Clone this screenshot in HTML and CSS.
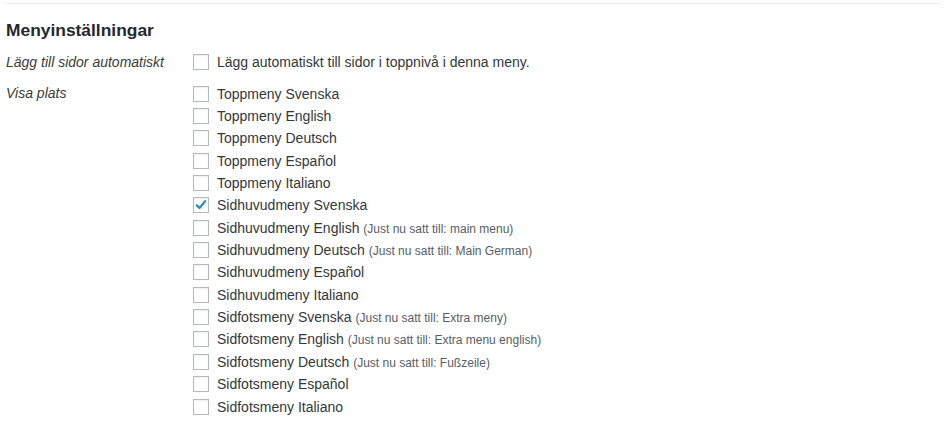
FILE: index.html
```html
<!DOCTYPE html>
<html lang="sv">
<head>
    <meta charset="UTF-8">
    <title>Menyinställningar</title>
    <link rel="stylesheet" href="styles.css">
</head>
<body>
    <div class="menuSettings">
        <h3 class="settingsTitle">Menyinställningar</h3>

        <dl class="settingGroup autoAdd">
            <dt class="groupLabel">Lägg till sidor automatiskt</dt>
            <dd class="groupInput">
                <label class="option"><span class="checkbox"></span><span>Lägg automatiskt till sidor i toppnivå i denna meny.</span></label>
            </dd>
        </dl>

        <dl class="settingGroup locations">
            <dt class="groupLabel">Visa plats</dt>
            <dd class="groupInput">
                <label class="option"><span class="checkbox"></span><span>Toppmeny Svenska</span></label>
                <label class="option"><span class="checkbox"></span><span>Toppmeny English</span></label>
                <label class="option"><span class="checkbox"></span><span>Toppmeny Deutsch</span></label>
                <label class="option"><span class="checkbox"></span><span>Toppmeny Español</span></label>
                <label class="option"><span class="checkbox"></span><span>Toppmeny Italiano</span></label>
                <label class="option"><span class="checkbox checked">
                    <svg viewBox="0 0 16 16" width="16" height="16"><path d="M3.2 8.2 L6.3 11.4 L12.8 3.6" fill="none" stroke="#1e8cbe" stroke-width="2.4" stroke-linecap="round" stroke-linejoin="round"/></svg>
                </span><span>Sidhuvudmeny Svenska</span></label>
                <label class="option"><span class="checkbox"></span><span>Sidhuvudmeny English <span class="current">(Just nu satt till: main menu)</span></span></label>
                <label class="option"><span class="checkbox"></span><span>Sidhuvudmeny Deutsch <span class="current">(Just nu satt till: Main German)</span></span></label>
                <label class="option"><span class="checkbox"></span><span>Sidhuvudmeny Español</span></label>
                <label class="option"><span class="checkbox"></span><span>Sidhuvudmeny Italiano</span></label>
                <label class="option"><span class="checkbox"></span><span>Sidfotsmeny Svenska <span class="current">(Just nu satt till: Extra meny)</span></span></label>
                <label class="option"><span class="checkbox"></span><span>Sidfotsmeny English <span class="current">(Just nu satt till: Extra menu english)</span></span></label>
                <label class="option"><span class="checkbox"></span><span>Sidfotsmeny Deutsch <span class="current">(Just nu satt till: Fußzeile)</span></span></label>
                <label class="option"><span class="checkbox"></span><span>Sidfotsmeny Español</span></label>
                <label class="option"><span class="checkbox"></span><span>Sidfotsmeny Italiano</span></label>
            </dd>
        </dl>
    </div>
</body>
</html>
```

FILE: styles.css
```css
* {
    margin: 0;
    padding: 0;
    box-sizing: border-box;
}

body {
    background: #fff;
    color: #32373c;
    font-family: "Liberation Sans", Arial, sans-serif;
    font-size: 14px;
}

.menuSettings {
    margin: 3px 8px 0 6px;
    border-top: 1px solid #eee;
}

.settingsTitle {
    font-size: 17.4px;
    font-weight: bold;
    color: #23282d;
    line-height: 20px;
    margin-top: 16px;
}

.settingGroup {
    display: flex;
}

.autoAdd {
    margin-top: 11px;
}

.locations {
    margin-top: 9px;
}

.groupLabel {
    width: 187px;
    flex-shrink: 0;
    font-style: italic;
    color: #3c3c3c;
    line-height: 22.36px;
}

.groupInput {
    display: flex;
    flex-direction: column;
}

.option {
    display: flex;
    align-items: center;
    height: 22.36px;
    white-space: nowrap;
}

.checkbox {
    width: 16px;
    height: 16px;
    border: 1px solid #b4b9be;
    background: #fff;
    box-shadow: inset 0 1px 2px rgba(0, 0, 0, 0.07);
    margin-right: 8px;
    flex-shrink: 0;
    display: flex;
    align-items: center;
    justify-content: center;
}

.checkbox svg {
    display: block;
    width: 14px;
    height: 14px;
}

.current {
    font-size: 12px;
    color: #555d66;
}
```
